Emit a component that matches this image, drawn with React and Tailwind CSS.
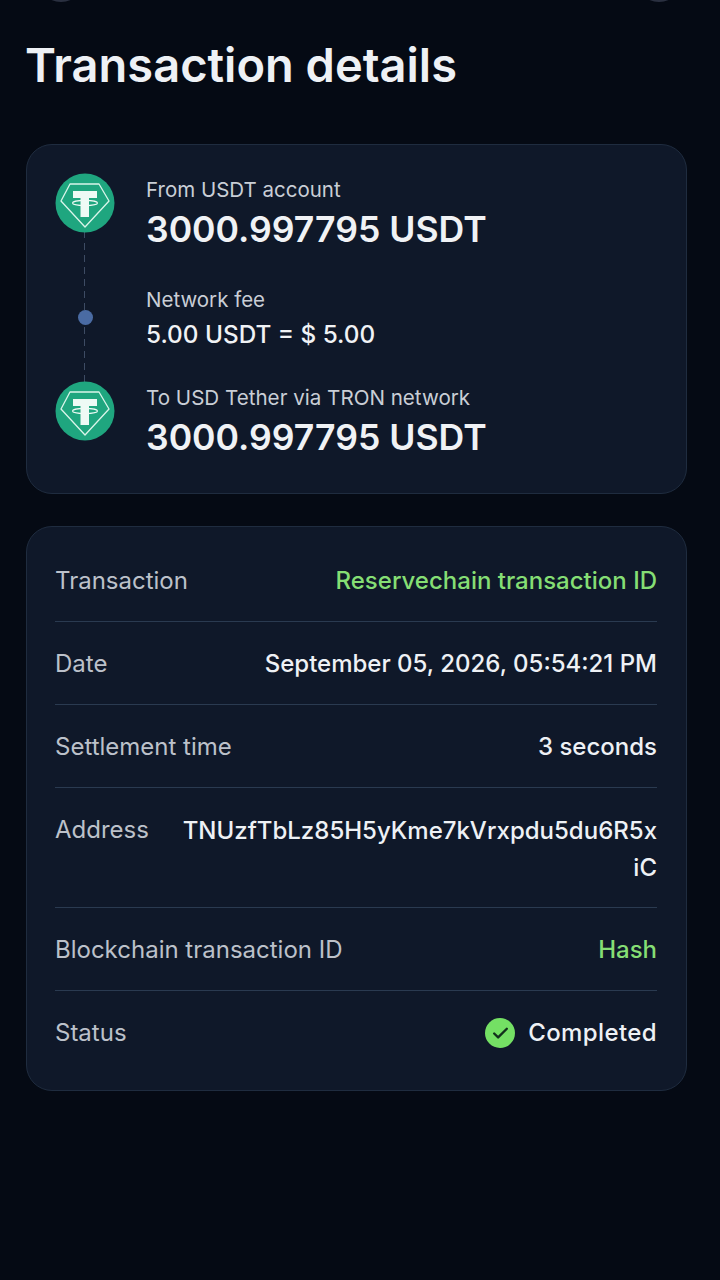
import { Check } from 'lucide-react';

const TetherIcon = () => (
    <svg viewBox="0 0 60 60" className="w-[60px] h-[60px] shrink-0 relative z-10">
        <circle cx="30" cy="30" r="29.5" fill="#1fa67f" />
        <path d="M15 11 H44 L54 28 L30 54 L6 28 Z" fill="none" stroke="#d9f5ea" strokeWidth="1.3" strokeLinejoin="round" />
        <path d="M18 18 H42 V25 H34 V44 H25.5 V25 H18 Z" fill="#eefaf5" />
        <ellipse cx="30" cy="30" rx="12.5" ry="2.6" fill="none" stroke="#eefaf5" strokeWidth="1.1" />
    </svg>
);

const Row = ({ label, children, top }) => (
    <div className={`flex justify-between border-b border-[#2a3a50] last:border-b-0 gap-8 ${top ? 'items-start pt-[24px] h-[120px]' : 'items-center h-[83px] pt-[1px]'}`}>
        <span className="text-[24px] leading-[36px] text-[#bcc1ca] shrink-0">{label}</span>
        {children}
    </div>
);

const App = () => {
    return (
        <div className="min-h-[1280px] bg-[#050a14] px-[26px] font-['Inter','Noto_Sans',sans-serif] overflow-hidden">
            {/* top buttons, cut off by the screen edge */}
            <div className="flex justify-between h-[2px] overflow-hidden px-[10px]">
                <div className="w-[50px] h-[50px] rounded-full bg-[#2a3040] -mt-[48px]" />
                <div className="w-[50px] h-[50px] rounded-full bg-[#2a3040] -mt-[48px]" />
            </div>

            <h1 className="mt-[32px] -ml-[1px] text-[47px] leading-[62px] font-semibold text-[#eef1f5]">Transaction details</h1>

            {/* Transfer card */}
            <div className="mt-[48px] h-[350px] w-[661px] rounded-[26px] border border-[#1f2c3f] bg-[#0f1829] pl-[28px] pt-[28px] flex gap-[31px]">
                <div className="relative flex flex-col items-center w-[60px] h-[268px] shrink-0">
                    <div className="absolute top-[58px] bottom-[58px] left-[29px] w-[1px] bg-[repeating-linear-gradient(to_bottom,#3d4b63_0,#3d4b63_7px,transparent_7px,transparent_12px)]" />
                    <TetherIcon />
                    <div className="w-[15px] h-[15px] rounded-full bg-[#4a6ba3] relative z-10 mt-[77px]" />
                    <div className="mt-auto">
                        <TetherIcon />
                    </div>
                </div>
                <div className="flex flex-col text-[#f0f2f5]">
                    <span className="text-[20.5px] leading-[28px] text-[#c9ced6] mt-[3px]">From USDT account</span>
                    <span className="text-[35.6px] leading-[44px] font-semibold mt-[4px]">3000.997795 USDT</span>
                    <span className="text-[20.5px] leading-[28px] text-[#c9ced6] mt-[34px]">Network fee</span>
                    <span className="text-[24.3px] leading-[32px] font-medium mt-[4px]">5.00 USDT = $ 5.00</span>
                    <span className="text-[20.6px] leading-[28px] text-[#c9ced6] mt-[34px]">To USD Tether via TRON network</span>
                    <span className="text-[35.6px] leading-[44px] font-semibold mt-[4px]">3000.997795 USDT</span>
                </div>
            </div>

            {/* Details card */}
            <div className="mt-[32px] w-[661px] rounded-[26px] border border-[#1f2c3f] bg-[#0f1829] px-[28px] pr-[29px] pt-[12px] pb-[16px]">
                <Row label="Transaction">
                    <span className="text-[24px] font-medium text-[#85de74]">Reservechain transaction ID</span>
                </Row>
                <Row label="Date">
                    <span className="text-[24px] font-medium text-[#eef1f5]">September 05, 2026, 05:54:21 PM</span>
                </Row>
                <Row label="Settlement time">
                    <span className="text-[24px] font-medium text-[#eef1f5]">3 seconds</span>
                </Row>
                <Row label="Address" top>
                    <span className="text-[24px] leading-[37px] font-medium text-[#eef1f5] text-right break-all">TNUzfTbLz85H5yKme7kVrxpdu5du6R5xiC</span>
                </Row>
                <Row label="Blockchain transaction ID">
                    <span className="text-[24px] font-medium text-[#85de74]">Hash</span>
                </Row>
                <Row label="Status">
                    <span className="flex items-center gap-[13px] text-[24px] font-medium text-[#eef1f5] tracking-[0.4px]">
                        <span className="w-[30px] h-[30px] rounded-full bg-[#74e064] flex items-center justify-center">
                            <Check className="w-[19px] h-[19px] text-[#12301c]" strokeWidth={3} />
                        </span>
                        Completed
                    </span>
                </Row>
            </div>
        </div>
    );
};

export default App;
